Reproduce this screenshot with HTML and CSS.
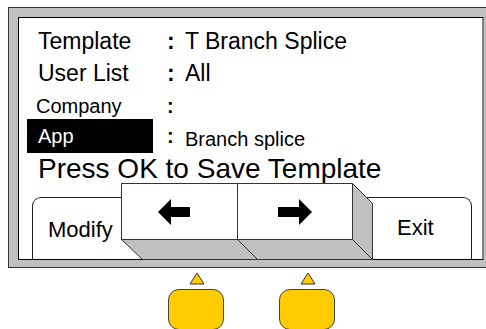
FILE: index.html
```html
<!DOCTYPE html>
<html>
<head>
  <title>Template</title>
  <link rel="stylesheet" href="styles.css">
</head>
<body>
  <div id="frame">
    <div id="screen">
      <div class="fields">
        <div class="row big">
          <span class="label">Template</span>
          <span class="colon">:</span>
          <span class="value">T Branch Splice</span>
        </div>
        <div class="row big">
          <span class="label">User List</span>
          <span class="colon">:</span>
          <span class="value">All</span>
        </div>
        <div class="row small company">
          <span class="label">Company</span>
          <span class="colon">:</span>
          <span class="value"></span>
        </div>
        <div class="row small selected">
          <span class="label">App</span>
          <span class="colon">:</span>
          <span class="value">Branch splice</span>
        </div>
      </div>
      <div id="prompt">Press OK to Save Template</div>
      <div class="tabs">
        <div class="tab" id="modify-tab">Modify</div>
        <div class="tab" id="exit-tab">Exit</div>
      </div>
    </div>

    <!-- the two arrow keys sit over the tabs -->
    <svg id="keys" width="252" height="77" viewBox="0 0 252 77">
      <g stroke="#333" stroke-width="1">
        <polygon points="231.5,0.5 251.5,20.5 251.5,76.5 231.5,56.5" fill="#c0c0c0" />
        <polygon points="0.5,56.5 116.5,56.5 136.5,76.5 21.5,76.5" fill="#c0c0c0" />
        <polygon points="116.5,56.5 231.5,56.5 251.5,76.5 136.5,76.5" fill="#c0c0c0" />
        <rect x="0.5" y="0.5" width="116" height="56" fill="#fff" />
        <rect x="116.5" y="0.5" width="115" height="56" fill="#fff" />
      </g>
      <polygon points="37,29 50,16 50,24 69,24 69,34 50,34 50,42" fill="#000" />
      <polygon points="191,29 178,16 178,24 157,24 157,34 178,34 178,42" fill="#000" />
    </svg>
  </div>

  <div class="controls">
    <div class="control">
      <svg width="16" height="13" viewBox="0 0 16 13"><polygon points="8,1 15,12 1,12" fill="#ffcc00" stroke="#333" stroke-width="1" /></svg>
      <div class="pad"></div>
    </div>
    <div class="control">
      <svg width="16" height="13" viewBox="0 0 16 13"><polygon points="8,1 15,12 1,12" fill="#ffcc00" stroke="#333" stroke-width="1" /></svg>
      <div class="pad"></div>
    </div>
  </div>
</body>
</html>
```

FILE: styles.css
```css
body {
  margin: 0;
  width: 486px;
  height: 329px;
  overflow: hidden;
  background: #fff;
  font-family: "Liberation Sans", Arial, sans-serif;
  color: #000;
}

#frame {
  position: relative;
  margin: 7px 0 0 8px;
  width: 468px;
  padding: 9px 0 7px 9px;
  background-color: #c0c0c0;
  border: 1px solid #333;
  border-right: none;
}

#screen {
  box-sizing: border-box;
  width: 466px;
  height: 243px;
  background: #fff;
  border: 1px solid #000;
  border-right: 2px solid #808080;
  display: flex;
  flex-direction: column;
}

.fields {
  padding-top: 7px;
}

.row {
  display: flex;
  margin-left: 8px;
}

.label {
  width: 126px;
  padding-left: 11px;
  box-sizing: border-box;
}

.colon {
  width: 32px;
  padding-left: 14px;
  box-sizing: border-box;
  font-weight: bold;
}

.big {
  height: 32px;
  font-size: 23px;
  line-height: 32px;
}

.small {
  font-size: 20px;
}

.company {
  height: 30px;
  padding-top: 4px;
  box-sizing: border-box;
  line-height: 26px;
}

.company .label {
  padding-left: 9px;
}

.selected {
  height: 34px;
  line-height: 32px;
}

.selected .label {
  padding-top: 1px;
  background: #000;
  color: #fff;
}

.selected .colon {
  padding-top: 1px;
}

.selected .value {
  padding-top: 4px;
}

#prompt {
  height: 31px;
  padding-left: 19px;
  font-size: 28px;
  line-height: 31px;
}

.tabs {
  margin-top: auto;
  height: 62px;
  display: flex;
  justify-content: space-between;
  padding: 0 10px 0 13px;
}

.tab {
  background: #fff;
  border: 1px solid #222;
  border-bottom: none;
  font-size: 22px;
}

#modify-tab {
  width: 108px;
  padding: 19px 0 0 15px;
  border-top-left-radius: 9px;
}

#exit-tab {
  width: 74px;
  padding: 17px 0 0 36px;
  border-top-right-radius: 9px;
}

#keys {
  position: absolute;
  left: 112px;
  top: 175px;
}

.controls {
  display: flex;
  gap: 55px;
  margin: 4px 0 0 168px;
}

.control {
  width: 56px;
  display: flex;
  flex-direction: column;
  align-items: center;
}

.control svg {
  margin-left: 1px;
}

.pad {
  margin-top: 4px;
  width: 56px;
  height: 41px;
  box-sizing: border-box;
  background: #ffcc00;
  border: 1px solid #444;
  border-radius: 11px;
}
```
